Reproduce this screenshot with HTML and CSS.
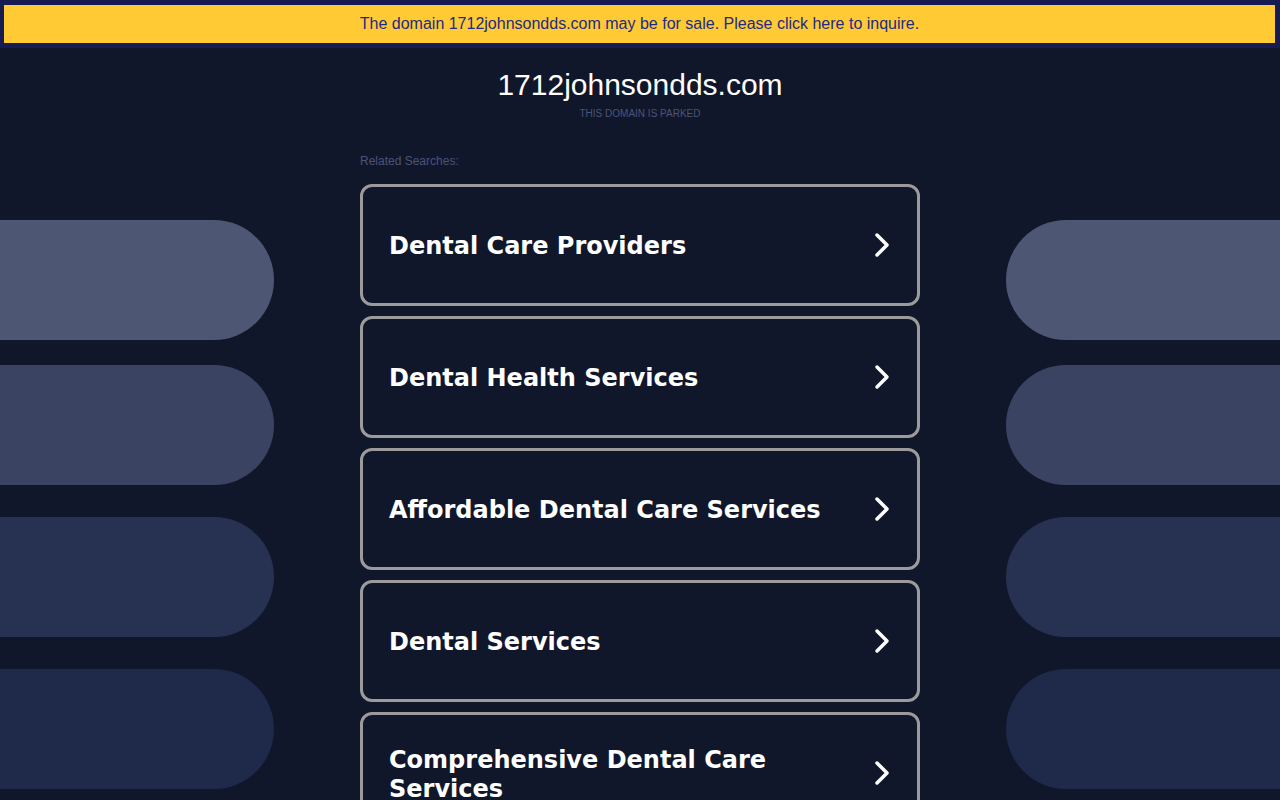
FILE: index.html
```html
<!DOCTYPE html>
<html lang="en">
<head>
<meta charset="utf-8">
<title>1712johnsondds.com</title>
<link rel="stylesheet" href="styles.css">
</head>
<body>
<div class="banner-wrap">
  <div class="banner">The domain 1712johnsondds.com may be for sale. Please click here to inquire.</div>
</div>
<div class="stage">
  <div class="side side-left">
    <div class="pill p1"></div>
    <div class="pill p2"></div>
    <div class="pill p3"></div>
    <div class="pill p4"></div>
  </div>
  <main class="center">
    <h1 class="domain">1712johnsondds.com</h1>
    <div class="parked">THIS DOMAIN IS PARKED</div>
    <div class="related">Related Searches:</div>
    <div class="cards">
      <a class="card"><span class="label">Dental Care Providers</span><svg class="chev" viewBox="0 0 16 26"><path d="M3 3 L13 13 L3 23"/></svg></a>
      <a class="card"><span class="label">Dental Health Services</span><svg class="chev" viewBox="0 0 16 26"><path d="M3 3 L13 13 L3 23"/></svg></a>
      <a class="card"><span class="label">Affordable Dental Care Services</span><svg class="chev" viewBox="0 0 16 26"><path d="M3 3 L13 13 L3 23"/></svg></a>
      <a class="card"><span class="label">Dental Services</span><svg class="chev" viewBox="0 0 16 26"><path d="M3 3 L13 13 L3 23"/></svg></a>
      <a class="card"><span class="label">Comprehensive Dental Care Services</span><svg class="chev" viewBox="0 0 16 26"><path d="M3 3 L13 13 L3 23"/></svg></a>
    </div>
  </main>
  <div class="side side-right">
    <div class="pill p1"></div>
    <div class="pill p2"></div>
    <div class="pill p3"></div>
    <div class="pill p4"></div>
  </div>
</div>
</body>
</html>
```
FILE: styles.css
```css
html, body {
  margin: 0;
  padding: 0;
  height: 800px;
  overflow: hidden;
  background: #11172b;
}
body {
  font-family: "Liberation Sans", Arial, sans-serif;
}
.banner-wrap {
  background: #161b51;
  padding: 5px 5px 5px 4px;
}
.banner {
  background: #ffca33;
  height: 38px;
  line-height: 37px;
  text-align: center;
  color: #1d2a87;
  font-size: 16px;
}
.stage {
  display: flex;
  justify-content: space-between;
}
.side {
  width: 274px;
  display: flex;
  flex-direction: column;
  padding-top: 172px;
}
.side-right {
  align-items: flex-end;
}
.pill {
  height: 120px;
  width: 274px;
  flex: none;
}
.side-left .pill { border-radius: 0 60px 60px 0; }
.side-right .pill { border-radius: 60px 0 0 60px; }
.p1 { background: #4d5673; }
.p2 { background: #3a4361; margin-top: 25px; }
.p3 { background: #273151; margin-top: 32px; }
.p4 { background: #1f2949; margin-top: 32px; }
.center {
  width: 560px;
  flex: none;
  display: flex;
  flex-direction: column;
}
.domain {
  margin: 20px 0 0;
  text-align: center;
  color: #ffffff;
  font-weight: normal;
  font-size: 30px;
  line-height: 34px;
}
.parked {
  text-align: center;
  color: #4a5478;
  font-size: 10px;
  line-height: 12px;
  margin-top: 6px;
}
.related {
  color: #4a5478;
  font-size: 12px;
  line-height: 14px;
  margin-top: 34px;
}
.cards {
  margin-top: 16px;
  display: flex;
  flex-direction: column;
  gap: 10px;
}
.card {
  box-sizing: border-box;
  height: 122px;
  border: 3px solid #9b9b9b;
  border-radius: 12px;
  display: flex;
  align-items: center;
  justify-content: space-between;
  padding: 3px 27px 0 26px;
  color: #ffffff;
  font-family: "DejaVu Sans", Verdana, sans-serif;
  font-weight: bold;
  font-size: 24px;
  line-height: 29px;
  flex: none;
}
.label {
  max-width: 460px;
}
.chev {
  width: 16px;
  height: 26px;
  flex: none;
  margin-top: -3px;
}
.chev path {
  fill: none;
  stroke: #ffffff;
  stroke-width: 3.5;
  stroke-linecap: round;
  stroke-linejoin: round;
}
```
